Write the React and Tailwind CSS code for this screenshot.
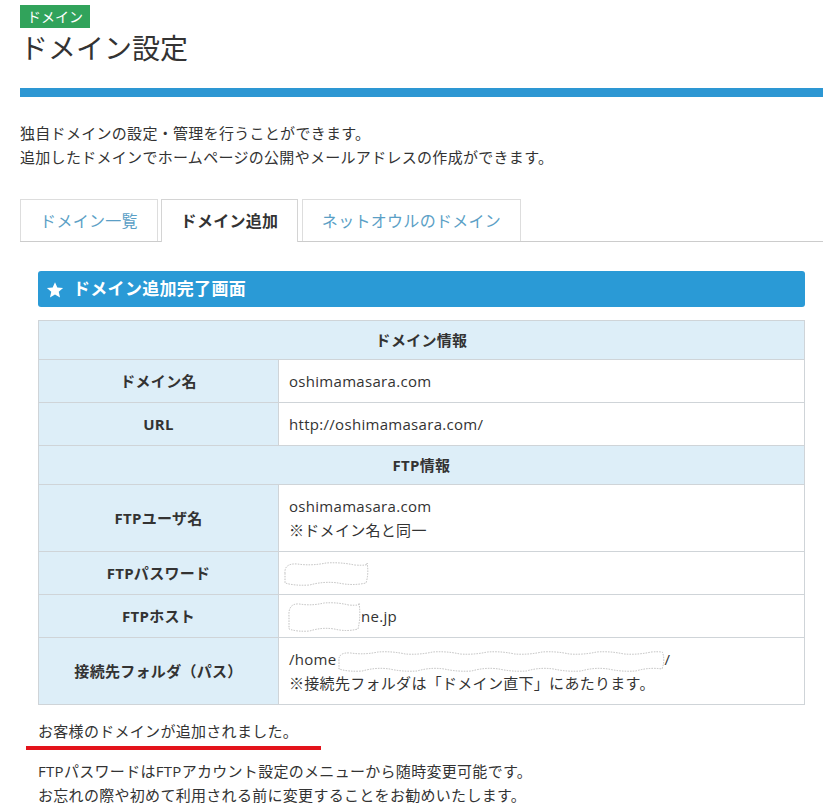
import React from "react";

function Redact({ w, h, className = "" }) {
  // wavy outline left over from a hand-made blur on the screenshot
  const bumps = Math.max(2, Math.round(w / 28));
  const step = w / bumps;
  let d = `M2 ${h / 2} Q1 2 ${step / 2} 3`;
  for (let i = 0; i < bumps; i++) {
    const x1 = i * step + step / 2;
    const x2 = Math.min(w - 2, x1 + step);
    d += ` Q${x1 + step / 2} ${i % 2 ? 1 : 5} ${x2} ${i % 2 ? 4 : 2}`;
  }
  d += ` Q${w} ${h / 2} ${w - 3} ${h - 3}`;
  for (let i = bumps; i > 0; i--) {
    const x1 = i * step - 2;
    const x2 = Math.max(2, x1 - step);
    d += ` Q${x1 - step / 2} ${i % 2 ? h : h - 5} ${x2} ${i % 2 ? h - 3 : h - 1}`;
  }
  d += " Z";
  return (
    <svg width={w} height={h} viewBox={`0 0 ${w} ${h}`} className={`block shrink-0 ${className}`}>
      <path d={d} fill="#fff" stroke="#aeaeae" strokeWidth="0.8" strokeDasharray="1.5 1.2" />
    </svg>
  );
}

function Row({ label, children }) {
  return (
    <tr>
      <th className="w-[240px] border border-[#cfd4d8] bg-[#ddeef8] py-[9px] text-center text-[15px] font-bold leading-6 text-[#333]">
        {label}
      </th>
      <td className="border border-[#cfd4d8] bg-white px-[10px] py-[9px] text-[15px] leading-6 text-[#333]">
        {children}
      </td>
    </tr>
  );
}

function HeadRow({ children }) {
  return (
    <tr>
      <th colSpan={2} className="border border-[#cfd4d8] bg-[#ddeef8] py-[7px] text-center text-[15px] font-bold leading-6 text-[#333]">
        {children}
      </th>
    </tr>
  );
}

export default function App() {
  return (
    <div className="min-h-[810px] bg-white font-['Open_Sans','Noto_Sans_CJK_JP',sans-serif] tracking-[0.3px] text-[#333]">
      <div className="w-[823px] pl-5">
        <div className="pt-1">
          <span className="inline-block h-[23px] bg-[#31a35b] px-[7px] text-[14px] leading-[23px] tracking-normal text-white">ドメイン</span>
        </div>
        <h1 className="text-[28px] font-normal leading-[40px] tracking-normal text-[#333]">ドメイン設定</h1>
        <div className="mt-[20px] h-[9px] bg-[#2d97d3]" />

        <div className="mt-[24px] text-[15px] leading-6">
          <p>独自ドメインの設定・管理を行うことができます。</p>
          <p>追加したドメインでホームページの公開やメールアドレスの作成ができます。</p>
        </div>

        <div className="mt-[30px] flex items-end gap-[3px] border-b border-[#cccccc]">
          <div className="flex h-[42px] w-[138px] items-center justify-center border border-b-0 border-[#dddddd] text-[16px] text-[#5b9fc6]">
            ドメイン一覧
          </div>
          <div className="-mb-px flex h-[43px] w-[137px] items-center justify-center border border-b-0 border-[#d4d4d4] bg-white pb-px text-[16px] font-bold text-[#333]">
            ドメイン追加
          </div>
          <div className="ml-px flex h-[42px] w-[219px] items-center justify-center border border-b-0 border-[#dddddd] text-[16px] text-[#5b9fc6]">
            ネットオウルのドメイン
          </div>
        </div>

        <div className="px-[18px] pt-[29px]">
          <div className="flex h-[36px] items-center gap-[9px] rounded-[3px] bg-[#2a9ad6] pl-[8px] text-white">
            <svg width="18" height="18" viewBox="0 0 24 24" className="mt-[2px]">
              <polygon points="12,1.5 15.1,8.6 22.8,9.3 17,14.4 18.7,22 12,18 5.3,22 7,14.4 1.2,9.3 8.9,8.6" fill="#fff" />
            </svg>
            <span className="text-[17px] font-bold">ドメイン追加完了画面</span>
          </div>

          <table className="mt-[13px] w-full border-collapse">
            <tbody>
              <HeadRow>ドメイン情報</HeadRow>
              <Row label="ドメイン名">oshimamasara.com</Row>
              <Row label="URL">http://oshimamasara.com/</Row>
              <HeadRow>FTP情報</HeadRow>
              <Row label="FTPユーザ名">
                <div>oshimamasara.com</div>
                <div>※ドメイン名と同一</div>
              </Row>
              <Row label="FTPパスワード">
                <div className="flex h-6 items-center">
                  <Redact w={86} h={25} className="-ml-[6px]" />
                </div>
              </Row>
              <Row label="FTPホスト">
                <div className="flex h-6 items-center">
                  <Redact w={74} h={31} className="-ml-[2px]" />
                  <span>ne.jp</span>
                </div>
              </Row>
              <Row label="接続先フォルダ（パス）">
                <div className="flex h-6 items-center">
                  <span>/home</span>
                  <Redact w={328} h={22} className="mt-[3px]" />
                  <span>/</span>
                </div>
                <div>※接続先フォルダは「ドメイン直下」にあたります。</div>
              </Row>
            </tbody>
          </table>

          <p className="mt-[14px] text-[15px] leading-6">お客様のドメインが追加されました。</p>
        </div>
        <div className="ml-[6px] mt-[3px] h-[4px] w-[295px] bg-[#e3131b]" />
        <div className="mt-[9px] px-[18px] text-[15px] leading-6">
          <p>FTPパスワードはFTPアカウント設定のメニューから随時変更可能です。</p>
          <p>お忘れの際や初めて利用される前に変更することをお勧めいたします。</p>
        </div>
      </div>
    </div>
  );
}
